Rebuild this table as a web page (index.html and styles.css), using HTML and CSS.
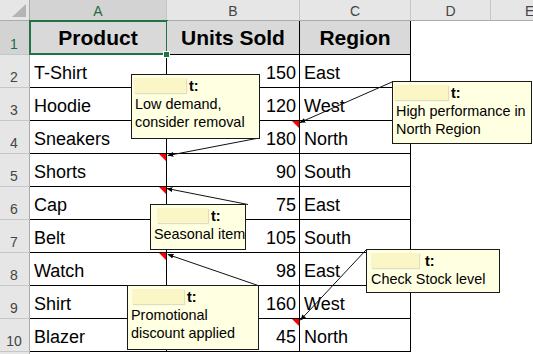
FILE: index.html
```html
<!DOCTYPE html>
<html>
<head>
<meta charset="utf-8">
<link rel="stylesheet" href="styles.css">
</head>
<body>
<div class="page">
  <div class="sheet">
    <div class="corner"><span class="tri"></span></div>
    <div class="colhead sel">A</div>
    <div class="colhead">B</div>
    <div class="colhead">C</div>
    <div class="colhead">D</div>
    <div class="colhead last">E</div>

    <div class="rowhead sel">1</div>
    <div class="cell hdr a1">Product<span class="handle"></span></div>
    <div class="cell hdr">Units Sold</div>
    <div class="cell hdr">Region</div>
    <div class="empty"></div><div class="empty"></div>

    <div class="rowhead">2</div>
    <div class="cell">T-Shirt</div><div class="cell num">150</div><div class="cell">East</div>
    <div class="empty"></div><div class="empty"></div>

    <div class="rowhead">3</div>
    <div class="cell">Hoodie</div><div class="cell num">120</div><div class="cell">West</div>
    <div class="empty"></div><div class="empty"></div>

    <div class="rowhead">4</div>
    <div class="cell">Sneakers</div><div class="cell num note">180</div><div class="cell">North</div>
    <div class="empty"></div><div class="empty"></div>

    <div class="rowhead">5</div>
    <div class="cell note">Shorts</div><div class="cell num">90</div><div class="cell">South</div>
    <div class="empty"></div><div class="empty"></div>

    <div class="rowhead">6</div>
    <div class="cell note">Cap</div><div class="cell num">75</div><div class="cell">East</div>
    <div class="empty"></div><div class="empty"></div>

    <div class="rowhead">7</div>
    <div class="cell">Belt</div><div class="cell num">105</div><div class="cell">South</div>
    <div class="empty"></div><div class="empty"></div>

    <div class="rowhead">8</div>
    <div class="cell note">Watch</div><div class="cell num">98</div><div class="cell">East</div>
    <div class="empty"></div><div class="empty"></div>

    <div class="rowhead">9</div>
    <div class="cell">Shirt</div><div class="cell num">160</div><div class="cell">West</div>
    <div class="empty"></div><div class="empty"></div>

    <div class="rowhead">10</div>
    <div class="cell">Blazer</div><div class="cell num note">45</div><div class="cell">North</div>
    <div class="empty"></div><div class="empty"></div>

    <div class="rowhead stub"></div>
    <div class="empty"></div><div class="empty"></div><div class="empty"></div><div class="empty"></div><div class="empty"></div>
  </div>

  <svg class="arrows" width="533" height="354" viewBox="0 0 533 354">
    <defs>
      <marker id="ah" viewBox="0 0 10 10" refX="9" refY="5" markerWidth="6" markerHeight="6" orient="auto">
        <path d="M0,1 L10,5 L0,9 z" fill="#000"/>
      </marker>
    </defs>
    <g stroke="#111" stroke-width="1" fill="none">
      <line x1="259" y1="138" x2="168" y2="155.5" marker-end="url(#ah)"/>
      <line x1="392" y1="82" x2="300" y2="122.5" marker-end="url(#ah)"/>
      <line x1="248" y1="204.5" x2="167" y2="188.5" marker-end="url(#ah)"/>
      <line x1="258" y1="285.5" x2="168" y2="254.5" marker-end="url(#ah)"/>
      <line x1="366" y1="250" x2="300.5" y2="320" marker-end="url(#ah)"/>
    </g>
  </svg>

  <div class="comment c1"><div class="who"><span class="name"></span><b>t:</b></div>Low demand,<br>consider removal</div>
  <div class="comment c2"><div class="who"><span class="name"></span><b>t:</b></div>High performance in<br>North Region</div>
  <div class="comment c3"><div class="who"><span class="name"></span><b>t:</b></div>Seasonal item</div>
  <div class="comment c4"><div class="who"><span class="name"></span><b>t:</b></div>Promotional<br>discount applied</div>
  <div class="comment c5"><div class="who"><span class="name"></span><b>t:</b></div>Check Stock level</div>
</div>
</body>
</html>
```
FILE: styles.css
```css
* { box-sizing: border-box; }
html, body { margin: 0; padding: 0; background: #fff; }
body { width: 533px; height: 354px; overflow: hidden; }

.page {
  position: relative;
  width: 533px;
  height: 354px;
  overflow: hidden;
  font-family: "Liberation Sans", Arial, sans-serif;
  color: #000;
}

.sheet {
  display: grid;
  grid-template-columns: 30px 137px 133px 111px 80px 42px;
  grid-template-rows: 21px 34px repeat(9, 33px) 2px;
  width: 533px;
  height: 354px;
}

.corner {
  position: relative;
  background: #e6e6e6;
  border-right: 1px solid #ababab;
  border-bottom: 1px solid #ababab;
}
.corner .tri {
  position: absolute;
  right: 3px;
  bottom: 3px;
  width: 0;
  height: 0;
  border-left: 14px solid transparent;
  border-bottom: 13px solid #b4b4b4;
}

.colhead {
  background: #e6e6e6;
  border-right: 1px solid #c6c6c6;
  border-bottom: 1px solid #ababab;
  font-size: 14px;
  color: #444;
  display: flex;
  align-items: center;
  justify-content: center;
  padding-top: 1px;
}
.colhead.last { justify-content: flex-start; padding-left: 34px; border-right: none; }
.colhead.sel { background: #d3d3d3; color: #1f6b40; }

.rowhead {
  background: #e6e6e6;
  border-right: 1px solid #ababab;
  border-bottom: 1px solid #c6c6c6;
  font-size: 14px;
  color: #444;
  display: flex;
  align-items: flex-end;
  justify-content: center;
  padding-bottom: 1px;
  line-height: 17px;
  padding-right: 1px;
  overflow: hidden;
}
.rowhead.sel { background: #d3d3d3; color: #1f6b40; }
.rowhead.stub { border-bottom: none; padding: 0; }

.cell {
  position: relative;
  border-right: 1px solid #000;
  border-bottom: 1px solid #000;
  font-size: 18px;
  line-height: 20px;
  display: flex;
  align-items: flex-end;
  padding: 0 4px 4px 4px;
  white-space: nowrap;
}
.cell.num { justify-content: flex-end; padding-right: 3px; }

.cell.hdr {
  background: #d9d9d9;
  font-weight: bold;
  font-size: 21px;
  line-height: 24px;
  justify-content: center;
  padding-bottom: 4px;
}

.cell.a1::after {
  content: "";
  position: absolute;
  left: -1px;
  top: -1px;
  right: -2px;
  bottom: -1px;
  border: 2px solid #217346;
}
.cell.a1 .handle {
  position: absolute;
  right: -4px;
  bottom: -4px;
  width: 7px;
  height: 7px;
  background: #217346;
  border: 1px solid #fff;
  z-index: 2;
}

.cell.note::before {
  content: "";
  position: absolute;
  right: 0;
  top: 0;
  width: 0;
  height: 0;
  border-top: 7px solid #ff0000;
  border-left: 7px solid transparent;
}

.empty { background: #fff; }

.arrows {
  position: absolute;
  left: 0;
  top: 0;
  pointer-events: none;
}

.comment {
  position: absolute;
  background: #ffffe1;
  border: 1px solid #1a1a1a;
  font-family: "Liberation Sans", Arial, sans-serif;
  font-size: 14.4px;
  line-height: 18px;
  padding: 1px 3px 0 3px;
  color: #000;
  white-space: nowrap;
}
.comment .who { height: 19px; display: flex; align-items: center; }
.comment .name {
  display: inline-block;
  width: 52px;
  height: 15px;
  background: #fbf6c6;
  box-shadow: 1px 1px 1px rgba(0,0,0,0.13);
  margin-left: -1px;
}
.comment b { margin-left: 3px; font-weight: bold; }

.c1 { left: 131px; top: 74px; width: 129px; height: 65px; }
.c2 { left: 392px; top: 81px; width: 140px; height: 63px; }
.c2 .name { margin-left: -2px; width: 54px; }
.c3 { left: 150px; top: 204px; width: 96px; height: 46px; }
.c3 .name { margin-left: 3px; width: 51px; }
.c4 { left: 127px; top: 285px; width: 132px; height: 65px; }
.c4 .name { margin-left: 1px; }
.c5 { left: 366px; top: 249px; width: 134px; height: 44px; padding-left: 4px; }
.c5 .name { margin-left: 0; width: 48px; }
.c5 b { margin-left: 6px; }
```
